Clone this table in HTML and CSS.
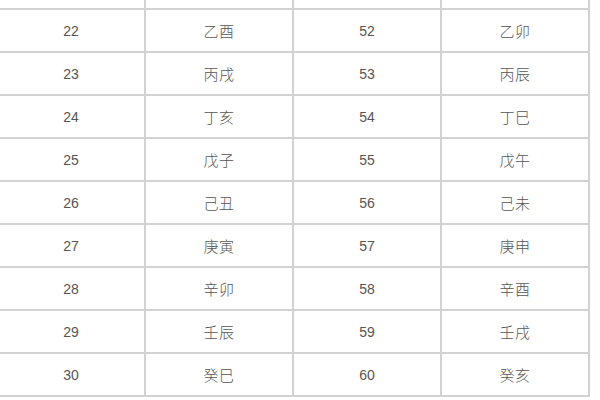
FILE: index.html
```html
<!DOCTYPE html>
<html lang="zh">
<head>
<meta charset="utf-8">
<link rel="stylesheet" href="styles.css">
</head>
<body>
<div class="table">
  <div class="cell"></div><div class="cell"></div><div class="cell"></div><div class="cell"></div>
  <div class="cell num">22</div><div class="cell zh">乙酉</div><div class="cell num">52</div><div class="cell zh">乙卯</div>
  <div class="cell num">23</div><div class="cell zh">丙戌</div><div class="cell num">53</div><div class="cell zh">丙辰</div>
  <div class="cell num">24</div><div class="cell zh">丁亥</div><div class="cell num">54</div><div class="cell zh">丁巳</div>
  <div class="cell num">25</div><div class="cell zh">戊子</div><div class="cell num">55</div><div class="cell zh">戊午</div>
  <div class="cell num">26</div><div class="cell zh">己丑</div><div class="cell num">56</div><div class="cell zh">己未</div>
  <div class="cell num">27</div><div class="cell zh">庚寅</div><div class="cell num">57</div><div class="cell zh">庚申</div>
  <div class="cell num">28</div><div class="cell zh">辛卯</div><div class="cell num">58</div><div class="cell zh">辛酉</div>
  <div class="cell num">29</div><div class="cell zh">壬辰</div><div class="cell num">59</div><div class="cell zh">壬戌</div>
  <div class="cell num">30</div><div class="cell zh">癸巳</div><div class="cell num">60</div><div class="cell zh">癸亥</div>
</div>
</body>
</html>
```
FILE: styles.css
```css
html, body {
  margin: 0;
  padding: 0;
  background: #ffffff;
  overflow: hidden;
}
body {
  width: 600px;
  height: 400px;
}
.table {
  display: grid;
  grid-template-columns: 148px 148px 148px 148px;
  grid-auto-rows: 43px;
  margin-left: -2px;
  margin-top: -33px;
}
.cell {
  display: flex;
  align-items: center;
  justify-content: center;
  border-right: 2px solid #d2d2d2;
  border-bottom: 2px solid #d2d2d2;
  color: #555555;
  font-size: 14px;
}
.num {
  font-family: "Liberation Sans", Arial, sans-serif;
}
.zh {
  font-family: "Noto Sans CJK SC", "Liberation Sans", sans-serif;
  font-size: 15px;
  font-weight: 300;
  letter-spacing: 0.5px;
}
```
